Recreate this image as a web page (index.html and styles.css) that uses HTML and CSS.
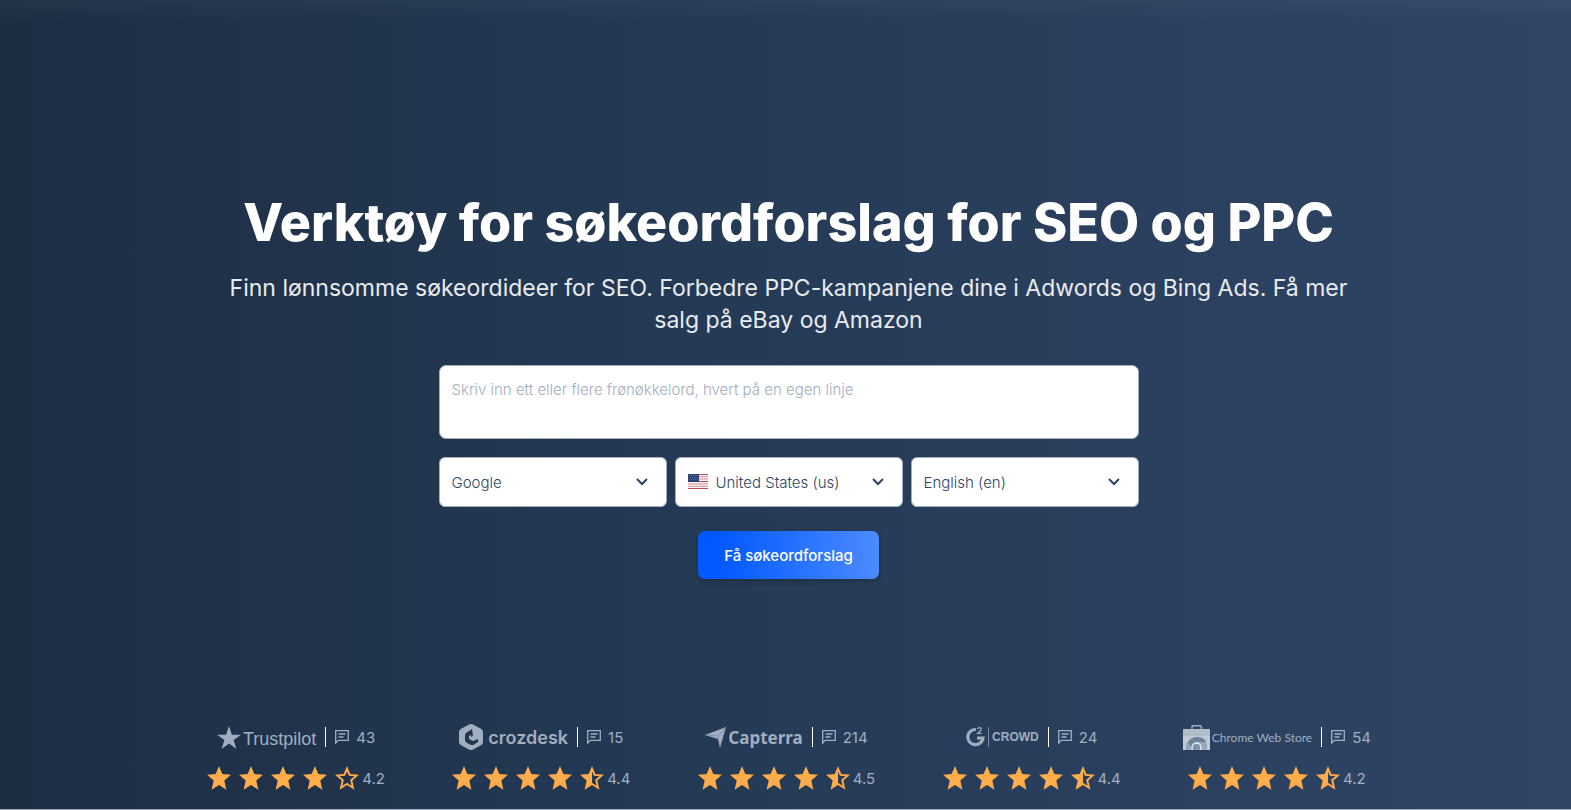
FILE: index.html
```
<!DOCTYPE html>
<html lang="no">
<head>
  <meta charset="utf-8">
  <meta name="viewport" content="width=device-width, initial-scale=1">
  <title>Verktøy for søkeordforslag</title>
  <link rel="stylesheet" href="styles.css">
</head>
<body>
  <svg class="sprite" aria-hidden="true">
    <symbol id="star" viewBox="0 0 24 24">
      <path fill="currentColor" d="M12 0l3.300 8.100 8.700.6-6.700 5.700 2.100 9.300L12 19l-7.400 4.700 2.100-9.300L0 8.700l8.700-.6z"/>
    </symbol>
    <symbol id="star-half" viewBox="0 0 24 24">
      <path fill="currentColor" fill-rule="evenodd" d="M12 0l3.300 8.100 8.700.6-6.700 5.700 2.100 9.300L12 19l-7.400 4.700 2.100-9.300L0 8.700l8.700-.6zM12 5.400v11.400l4.500 2.900-1.300-6 4.300-3.500-5.600-.4z"/>
    </symbol>
    <symbol id="star-empty" viewBox="0 0 24 24">
      <path fill="currentColor" fill-rule="evenodd" d="M12 0l3.300 8.100 8.700.6-6.700 5.700 2.100 9.300L12 19l-7.400 4.700 2.100-9.300L0 8.700l8.700-.6zM12 5.400L10.100 9.800l-5.600.4 4.300 3.500-1.300 6 4.500-2.900 4.500 2.900-1.300-6 4.300-3.500-5.600-.4z"/>
    </symbol>
    <symbol id="comment" viewBox="0 0 14 14">
      <path fill="none" stroke="currentColor" stroke-width="1.300" d="M.7 13V.7h12.600v9.600H3.200zM3.500 4h7M3.500 7h5"/>
    </symbol>
  </svg>

  <main class="hero">
    <section class="intro">
      <h1>Verktøy for søkeordforslag for SEO og PPC</h1>
      <p class="subtitle">Finn lønnsomme søkeordideer for SEO. Forbedre PPC-kampanjene dine i Adwords og Bing Ads. Få mer salg på eBay og Amazon</p>
      <form class="search">
        <textarea name="keywords" aria-label="Frønøkkelord" placeholder="Skriv inn ett eller flere frønøkkelord, hvert på en egen linje"></textarea>
        <div class="selects">
          <div class="select">
            <select name="engine" aria-label="Søkemotor"><option>Google</option></select>
            <svg class="chevron" viewBox="0 0 12 8"><path d="M1 1l5 5 5-5"/></svg>
          </div>
          <div class="select select-country">
            <svg class="flag" viewBox="0 0 20 15">
              <path fill="#f8f3f5" d="M0 0h20v15H0z"/>
              <path stroke="#b94a5c" d="M0 .5h20M0 7.500h20M0 14.500h20"/>
              <path stroke="#d98c98" d="M0 2.700h20M0 5h20M0 9.900h20M0 12.200h20"/>
              <path fill="#2c4272" d="M0 0h11v8H0z"/>
              <path stroke="#71809f" stroke-dasharray="1 1" stroke-width=".7" d="M1 1.500h9M2 3.500h8M1 5.500h9"/>
            </svg>
            <select name="country" aria-label="Land"><option>United States (us)</option></select>
            <svg class="chevron" viewBox="0 0 12 8"><path d="M1 1l5 5 5-5"/></svg>
          </div>
          <div class="select">
            <select name="language" aria-label="Språk"><option>English (en)</option></select>
            <svg class="chevron" viewBox="0 0 12 8"><path d="M1 1l5 5 5-5"/></svg>
          </div>
        </div>
        <button type="submit">Få søkeordforslag</button>
      </form>
    </section>

    <section class="ratings">
      <div class="rating">
        <div class="source">
          <svg class="logo-star" viewBox="0 0 24 23"><path fill="currentColor" d="M12 0l2.900 8.700H24l-7.400 5.400L19.400 23 12 17.400 4.600 23l2.800-8.900L0 8.700h9.100z"/></svg>
          <span class="brand trustpilot">Trustpilot</span>
          <span class="count"><svg><use href="#comment"/></svg>43</span>
        </div>
        <div class="stars">
          <svg><use href="#star"/></svg><svg><use href="#star"/></svg><svg><use href="#star"/></svg><svg><use href="#star"/></svg><svg><use href="#star-empty"/></svg>
          <span>4.2</span>
        </div>
      </div>
      <div class="rating">
        <div class="source">
          <svg class="logo-crozdesk" viewBox="0 0 24 26"><path fill="currentColor" fill-rule="evenodd" d="M10 .5q2-1 4 0l8 4.300q2 1.200 2 3.200v10q0 2-2 3.200l-8 4.300q-2 1-4 0l-8-4.300Q0 20 0 18V8q0-2 2-3.200zM13 5L7 9q-1 1-1 3v4q0 2 2 3l3 1.500q2 1 4 0l4-2.500v-3l-5 2-4-2v-3l2-1v2l2-1z"/></svg>
          <span class="brand crozdesk">crozdesk</span>
          <span class="count"><svg><use href="#comment"/></svg>15</span>
        </div>
        <div class="stars">
          <svg><use href="#star"/></svg><svg><use href="#star"/></svg><svg><use href="#star"/></svg><svg><use href="#star"/></svg><svg><use href="#star-half"/></svg>
          <span>4.4</span>
        </div>
      </div>
      <div class="rating">
        <div class="source">
          <svg class="logo-capterra" viewBox="0 0 21 21"><path fill="currentColor" d="M0 8L21 0l-6 21-2-9z"/><path fill="none" stroke="#6f8097" stroke-width=".6" d="M0 8l13 1L21 0M13 9v3"/></svg>
          <span class="brand capterra">Capterra</span>
          <span class="count"><svg><use href="#comment"/></svg>214</span>
        </div>
        <div class="stars">
          <svg><use href="#star"/></svg><svg><use href="#star"/></svg><svg><use href="#star"/></svg><svg><use href="#star"/></svg><svg><use href="#star-half"/></svg>
          <span>4.5</span>
        </div>
      </div>
      <div class="rating">
        <div class="source">
          <svg class="logo-g2" viewBox="0 0 23 20"><g fill="none" stroke="currentColor"><path stroke-width="3.200" d="M10 2.500A7.600 7.600 0 1 0 17 11h-6"/><path stroke-width="1.200" d="M11.500 2Q12 .6 13.500.6q2 0 1.700 1.800Q15 3.500 11.600 6.400h4"/><path stroke-width=".7" d="M22.500 0v20"/></g></svg>
          <span class="brand crowd">CROWD</span>
          <span class="count"><svg><use href="#comment"/></svg>24</span>
        </div>
        <div class="stars">
          <svg><use href="#star"/></svg><svg><use href="#star"/></svg><svg><use href="#star"/></svg><svg><use href="#star"/></svg><svg><use href="#star-half"/></svg>
          <span>4.4</span>
        </div>
      </div>
      <div class="rating">
        <div class="source">
          <svg class="logo-chrome" viewBox="0 0 27 25"><path fill="none" stroke="#a0adbd" stroke-width="1.500" d="M9 5V2q0-1.200 1.200-1.200h7Q18.400.8 18.400 2v3"/><path fill="#c2cbd5" d="M0 4h27v21H0z"/><path fill="#b2bdca" d="M0 4h27v7H0z"/><path fill="#6e8298" d="M3.500 25q-1-5 2-9 4-4.500 9-4 6 0 9 5H14q-4 1-5 8z"/><path fill="#98a8bc" d="M4 25q-1-4 1-8l5 8zM23 17q2 4 .5 8H18q1-5-3-8z"/><circle cx="13.500" cy="22.500" r="4.500" fill="#8295ad" stroke="#e6eaf0" stroke-width="1.400"/></svg>
          <span class="brand chrome">Chrome Web Store</span>
          <span class="count"><svg><use href="#comment"/></svg>54</span>
        </div>
        <div class="stars">
          <svg><use href="#star"/></svg><svg><use href="#star"/></svg><svg><use href="#star"/></svg><svg><use href="#star"/></svg><svg><use href="#star-half"/></svg>
          <span>4.2</span>
        </div>
      </div>
    </section>
  </main>
</body>
</html>
```
FILE: styles.css
```
* {
  box-sizing: border-box;
}
body {
  margin: 0;
  font-family: Inter, "Open Sans", sans-serif;
  color: #fff;
}
svg {
  flex: none;
}
.sprite {
  display: none;
}
.hero {
  min-height: 100vh;
  display: flex;
  flex-direction: column;
  justify-content: space-between;
  padding: 190px 24px 19px;
  background:
    linear-gradient(rgba(255, 255, 255, 0.03), transparent 20px),
    linear-gradient(90deg, #1d2e43, #243a55 45%, #304566);
  border-bottom: 1px solid #a0aec0;
}
.intro {
  width: 100%;
  max-width: 1140px;
  margin: 0 auto;
  padding-left: 6px;
  text-align: center;
}
h1 {
  margin: 0;
  font-size: 52px;
  line-height: 66px;
  font-weight: 800;
}
.subtitle {
  margin: 16px 0 29px;
  font-size: 23px;
  line-height: 32px;
  font-weight: 400;
  color: #e8ebf0;
}
.search {
  width: 100%;
  max-width: 700px;
  margin: 0 auto;
}
textarea {
  display: block;
  width: 100%;
  height: 74px;
  padding: 14px 12px;
  border: 1px solid #a0aec0;
  border-radius: 7px;
  resize: none;
  background: #fff;
  font: 300 15px/20px Inter, sans-serif;
}
textarea::placeholder {
  color: #a0aec0;
  opacity: 1;
}
.selects {
  display: grid;
  grid-template-columns: repeat(3, 1fr);
  gap: 8px;
  margin: 18px 0 24px;
}
.select {
  position: relative;
  display: flex;
}
select {
  width: 100%;
  height: 50px;
  padding: 0 12px;
  appearance: none;
  border: 1px solid #a0aec0;
  border-radius: 6px;
  background: #fff;
  color: #2d4464;
  font: 300 15px Inter, sans-serif;
}
.select-country select {
  padding-left: 40px;
}
.flag {
  position: absolute;
  left: 13px;
  top: 17px;
  width: 20px;
  height: 15px;
}
.chevron {
  position: absolute;
  right: 19px;
  top: 21px;
  width: 12px;
  height: 8px;
  fill: none;
  stroke: #2d4464;
  stroke-width: 2;
  pointer-events: none;
}
button {
  height: 48px;
  padding: 0 26px;
  border: 0;
  border-radius: 7px;
  background: linear-gradient(90deg, #0058ff 10%, #4c8bff);
  box-shadow: 0 2px 6px rgba(0, 0, 0, 0.2);
  color: #fff;
  font: 500 15px Inter, sans-serif;
}

/* review sites */
.ratings {
  display: grid;
  grid-template-columns: repeat(5, 1fr);
  width: 100%;
  max-width: 1228px;
  margin: 0 auto;
  padding-left: 2px;
}
.rating {
  display: flex;
  flex-direction: column;
  align-items: center;
  gap: 15px;
}
.source {
  display: flex;
  align-items: center;
  height: 28px;
  color: #a0aec0;
}
.logo-star {
  width: 24px;
  height: 23px;
}
.logo-crozdesk {
  width: 24px;
  height: 26px;
}
.logo-capterra {
  width: 21px;
  height: 21px;
}
.logo-g2 {
  width: 23px;
  height: 20px;
}
.logo-chrome {
  width: 27px;
  height: 25px;
}
.brand {
  margin-left: 2px;
}
.trustpilot {
  padding-top: 4px;
  font: 18px "Liberation Sans", sans-serif;
}
.crozdesk {
  margin-left: 5px;
  font-size: 18px;
  font-weight: 600;
}
.capterra {
  font: 700 17px "Noto Sans", sans-serif;
}
.crowd {
  margin-left: 3px;
  font: 700 12px "Liberation Sans Narrow", "Liberation Sans", sans-serif;
}
.chrome {
  font: 12px Lato, sans-serif;
}
.count {
  display: flex;
  align-items: center;
  gap: 7px;
  height: 20px;
  margin-left: 9px;
  padding-left: 9px;
  border-left: 1px solid #fff;
  font-size: 15px;
}
.count svg {
  width: 14px;
  height: 14px;
}
.stars {
  display: flex;
  align-items: center;
  gap: 8px;
  height: 24px;
  color: #ffac4a;
}
.stars svg {
  width: 24px;
  height: 24px;
}
.stars span {
  margin-left: -5px;
  font-size: 15px;
  color: #a0aec0;
}
```
